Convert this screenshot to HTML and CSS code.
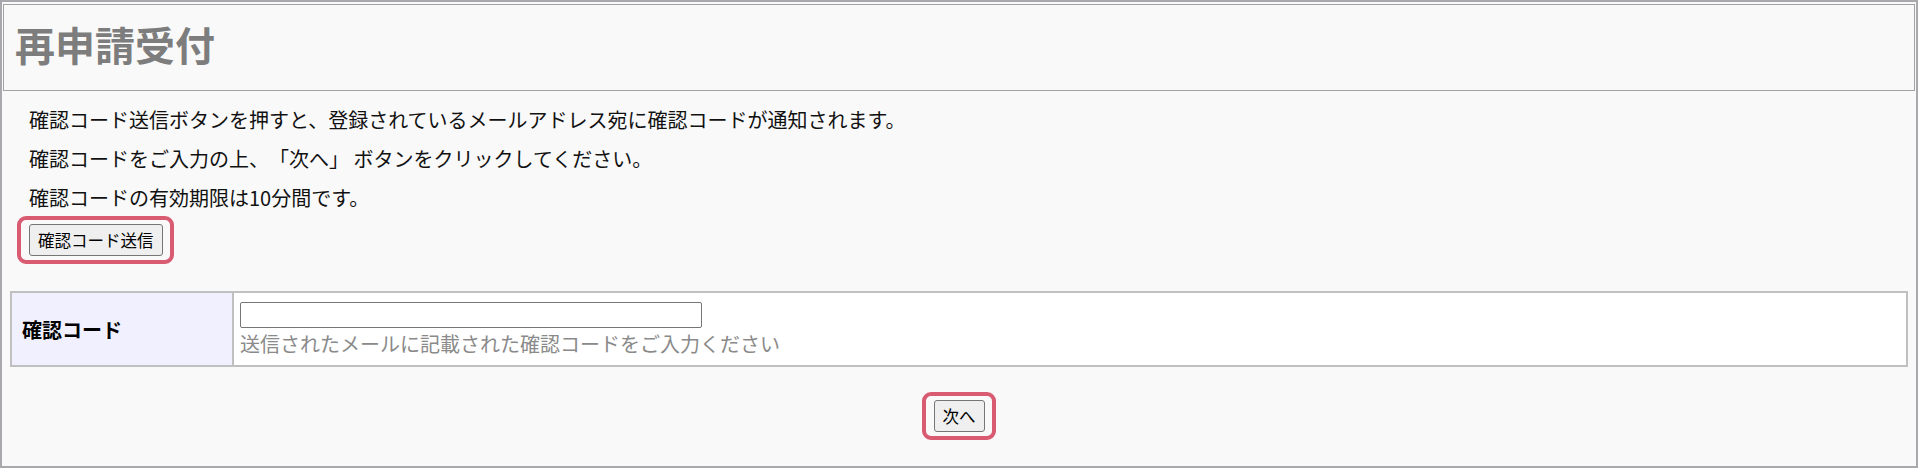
FILE: index.html
```html
<!DOCTYPE html>
<html lang="ja">
<head>
<meta charset="utf-8">
<title>再申請受付</title>
<link rel="stylesheet" href="styles.css">
</head>
<body>
<div class="frame">
  <header class="page-header">
    <h1 class="page-title">再申請受付</h1>
  </header>
  <section class="intro">
    <p class="intro-line">確認コード送信ボタンを押すと、登録されているメールアドレス宛に確認コードが通知されます。</p>
    <p class="intro-line">確認コードをご入力の上、「次へ」 ボタンをクリックしてください。</p>
    <p class="intro-line">確認コードの有効期限は10分間です。</p>
    <div class="send-row">
      <span class="mark"><button type="button" class="btn">確認コード送信</button></span>
    </div>
  </section>
  <div class="form-table">
    <div class="form-label">確認コード</div>
    <div class="form-value">
      <input type="text" class="code-input">
      <div class="hint">送信されたメールに記載された確認コードをご入力ください</div>
    </div>
  </div>
  <div class="next-row">
    <span class="mark"><button type="button" class="btn">次へ</button></span>
  </div>
</div>
</body>
</html>
```

FILE: styles.css
```css
* { box-sizing: border-box; }
html, body { margin: 0; padding: 0; }
body {
  font-family: "Noto Sans CJK JP", "Noto Sans", sans-serif;
  color: #111;
  background: #f9f9f9;
  text-spacing-trim: space-all;
}
.frame {
  width: 1918px;
  height: 468px;
  border: 2px solid #a9a9ad;
  background: #f9f9f9;
  display: flex;
  flex-direction: column;
}
.page-header {
  margin: 2px 1px 0 1px;
  border: 1px solid #a3a3a3;
  height: 87px;
  padding: 14px 11px 0 11px;
}
.page-title {
  margin: 0;
  font-size: 40px;
  line-height: 50px;
  font-weight: bold;
  color: #7d7d7d;
}
.intro {
  padding: 14px 27px 0 27px;
}
.intro-line {
  margin: 0 0 9px 0;
  font-size: 20px;
  line-height: 30px;
}
.send-row {
  padding-top: 2px;
}
.mark {
  position: relative;
  display: inline-block;
}
.mark::after {
  content: "";
  position: absolute;
  top: -8px;
  bottom: -8px;
  left: -12px;
  right: -11px;
  border: 4px solid #d95b72;
  border-radius: 9px;
  pointer-events: none;
}
.btn {
  display: block;
  font-family: "Noto Sans CJK JP", "Noto Sans", sans-serif;
  font-size: 16.5px;
  line-height: 20px;
  height: 32px;
  padding: 0 8px;
  color: #000;
  background: #efefef;
  border: 1px solid #767676;
  border-radius: 3px;
}
.form-table {
  margin: 35px 8px 0 8px;
  display: grid;
  grid-template-columns: 222px 1fr;
  border: 2px solid #c0c0c0;
  background: #fff;
}
.form-label {
  background: #f0f0ff;
  border-right: 2px solid #c0c0c0;
  font-size: 20px;
  font-weight: bold;
  color: #000;
  display: flex;
  align-items: center;
  padding: 0 10px;
}
.form-value {
  padding: 9px 6px 9px 6px;
}
.code-input {
  display: block;
  width: 462px;
  height: 26px;
  border: 1px solid #767676;
  border-radius: 2px;
  background: #fff;
  margin: 0;
}
.hint {
  margin-top: 4px;
  font-size: 20px;
  line-height: 24px;
  color: #8a8a8a;
}
.next-row {
  display: flex;
  justify-content: center;
  padding-top: 33px;
}
```
